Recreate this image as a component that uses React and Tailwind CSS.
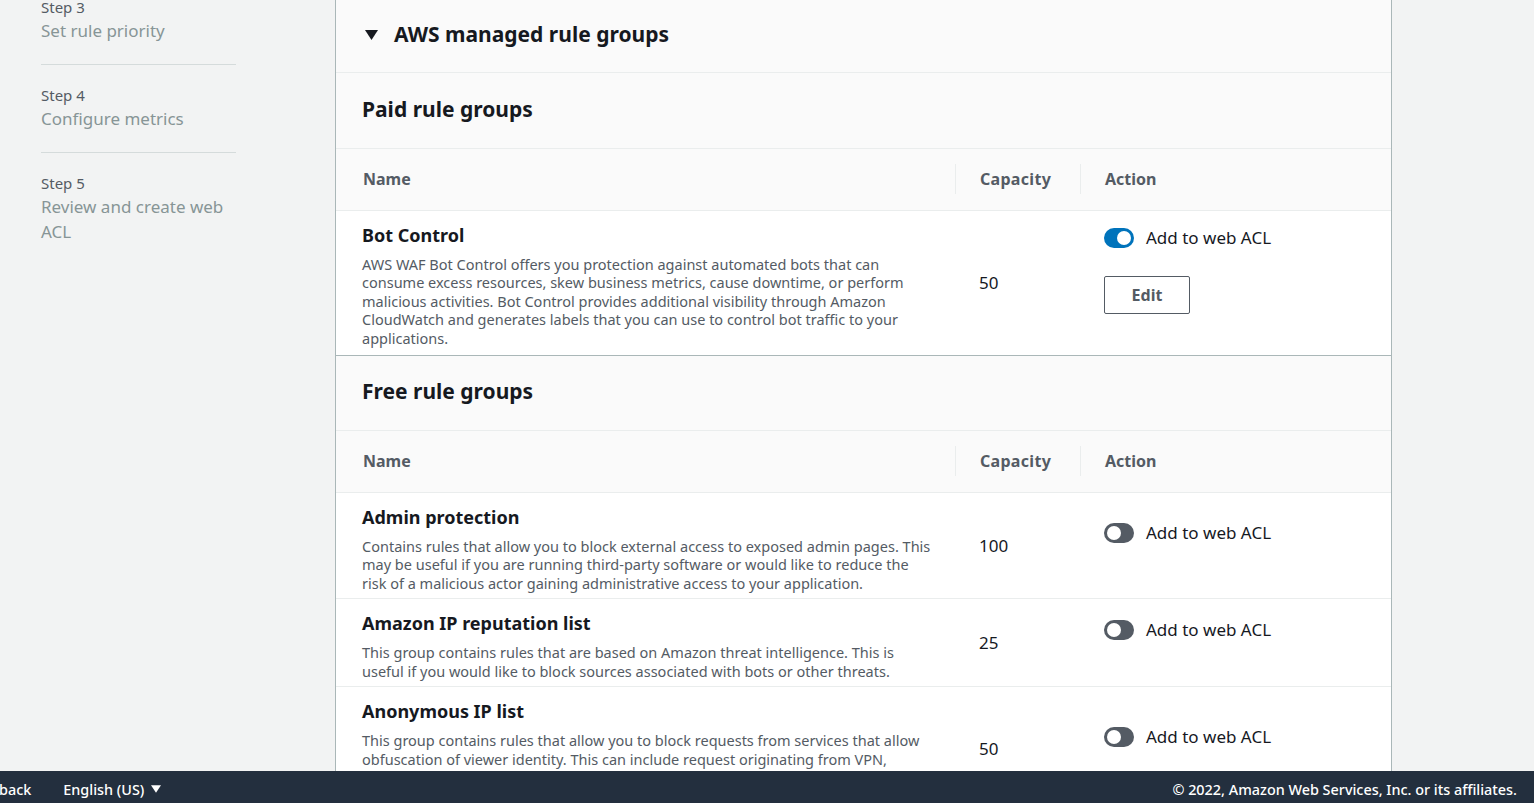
import { useState } from 'react';

const steps = [
  { label: 'Step 3', title: 'Set rule priority' },
  { label: 'Step 4', title: 'Configure metrics' },
  { label: 'Step 5', title: 'Review and create web ACL' },
];

const freeGroups = [
  {
    name: 'Admin protection',
    capacity: 100,
    description:
      'Contains rules that allow you to block external access to exposed admin pages. This may be useful if you are running third-party software or would like to reduce the risk of a malicious actor gaining administrative access to your application.',
  },
  {
    name: 'Amazon IP reputation list',
    capacity: 25,
    description:
      'This group contains rules that are based on Amazon threat intelligence. This is useful if you would like to block sources associated with bots or other threats.',
  },
  {
    name: 'Anonymous IP list',
    capacity: 50,
    description:
      'This group contains rules that allow you to block requests from services that allow obfuscation of viewer identity. This can include request originating from VPN, proxies, Tor nodes, and hosting providers. This is useful if you want to filter out viewers that may be trying to hide their identity from your application.',
  },
];

const Caret = ({ className }) => (
  <svg viewBox="0 0 13 10" className={className} fill="currentColor">
    <polygon points="0,0 13,0 6.5,10" />
  </svg>
);

const Toggle = ({ checked, onChange }) => (
  <button
    onClick={onChange}
    className={`w-[30px] h-[20px] rounded-full flex items-center px-[3px] ${checked ? 'bg-[#0073bb] justify-end' : 'bg-[#545b64] justify-start'}`}
    aria-pressed={checked}
  >
    <span className="block w-[14px] h-[14px] rounded-full bg-white"></span>
  </button>
);

const TableHead = () => (
  <thead>
    <tr className="bg-[#fafafa] border-b border-[#eaeded]">
      <th className="h-[61px] pl-[27px] text-left font-bold text-[16px] text-[#545b64]">Name</th>
      <th className="h-[61px] text-left font-bold text-[16px] text-[#545b64] tracking-[0.3px]">
        <div className="border-l border-[#eaeded] h-[30px] flex items-center pl-[24px]">Capacity</div>
      </th>
      <th className="h-[61px] text-left font-bold text-[16px] text-[#545b64]">
        <div className="border-l border-[#eaeded] h-[30px] flex items-center pl-[24px]">Action</div>
      </th>
    </tr>
  </thead>
);

const NameCell = ({ name, description, pb = 'pb-[6px]' }) => (
  <td className={`align-top pl-[26px] pr-[23px] pt-[12px] ${pb}`}>
    <div className="text-[18px] leading-[24px] font-bold text-[#16191f]">{name}</div>
    <p className="mt-[8px] text-[14.5px] leading-[18.5px] text-[#545b64]">{description}</p>
  </td>
);

const Cols = () => (
  <colgroup>
    <col className="w-[619px]" />
    <col className="w-[125px]" />
    <col />
  </colgroup>
);

const AddLabel = ({ checked, onChange }) => (
  <label className="flex items-center gap-[12px] h-[24px] text-[17px] text-[#16191f]">
    <Toggle checked={checked} onChange={onChange} />
    Add to web ACL
  </label>
);

export default function App() {
  const [bot, setBot] = useState(true);
  const [free, setFree] = useState([false, false, false]);

  return (
    <div
      className="h-[803px] overflow-hidden flex flex-col bg-[#f2f3f3] text-[#16191f]"
      style={{ fontFamily: '"Noto Sans", "Open Sans", sans-serif' }}
    >
      <div className="flex flex-1 min-h-0">
        {/* Wizard steps */}
        <aside className="w-[335px] shrink-0 pl-[41px]">
          <ol className="w-[195px] -mt-[23px]">
            {steps.map((s, i) => (
              <li
                key={s.label}
                className={`pt-[19px] pb-[21px] ${i < steps.length - 1 ? 'border-b border-[#d5dbdb]' : ''}`}
              >
                <div className="text-[15px] leading-[22px] text-[#545b64]">{s.label}</div>
                <div className="text-[17px] leading-[25px] text-[#879596]">{s.title}</div>
              </li>
            ))}
          </ol>
        </aside>

        {/* Main panel */}
        <main className="flex-1 min-w-0">
          <div className="w-[1057px] border-x border-[#aab7b8] bg-white">
            <div className="h-[73px] pb-[2px] bg-[#fafafa] border-b border-[#eaeded] flex items-center pl-[29px] gap-[16px]">
              <Caret className="w-[13px] h-[10px] text-[#16191f]" />
              <h2 className="text-[21px] font-bold">AWS managed rule groups</h2>
            </div>

            {/* Paid */}
            <div className="h-[76px] pb-[1px] bg-[#fafafa] border-b border-[#eaeded] flex items-center pl-[26px]">
              <h3 className="text-[21px] font-bold">Paid rule groups</h3>
            </div>
            <table className="w-full table-fixed border-collapse border-b border-[#aab7b8]">
              <Cols />
              <TableHead />
              <tbody>
                <tr>
                  <NameCell
                    pb="pb-[8px]"
                    name="Bot Control"
                    description="AWS WAF Bot Control offers you protection against automated bots that can consume excess resources, skew business metrics, cause downtime, or perform malicious activities. Bot Control provides additional visibility through Amazon CloudWatch and generates labels that you can use to control bot traffic to your applications."
                  />
                  <td className="align-middle pl-[24px] text-[17px]">50</td>
                  <td className="align-middle pl-[24px]">
                    <div className="pb-[26px]">
                      <AddLabel checked={bot} onChange={() => setBot(!bot)} />
                      <button className="mt-[26px] w-[86px] h-[38px] border border-[#545b64] rounded-[2px] bg-white text-[16px] font-bold text-[#545b64]">
                        Edit
                      </button>
                    </div>
                  </td>
                </tr>
              </tbody>
            </table>

            {/* Free */}
            <div className="h-[75px] pb-[2px] bg-[#fafafa] border-b border-[#eaeded] flex items-center pl-[26px]">
              <h3 className="text-[21px] font-bold">Free rule groups</h3>
            </div>
            <table className="w-full table-fixed border-collapse">
              <Cols />
              <TableHead />
              <tbody>
                {freeGroups.map((g, i) => (
                  <tr key={g.name} className="border-b border-[#eaeded]">
                    <NameCell name={g.name} description={g.description} />
                    <td className="align-middle pl-[24px] text-[17px]">{g.capacity}</td>
                    <td className="align-middle pl-[24px]">
                      <div className="pb-[25px]">
                        <AddLabel
                          checked={free[i]}
                          onChange={() => setFree(free.map((v, j) => (j === i ? !v : v)))}
                        />
                      </div>
                    </td>
                  </tr>
                ))}
              </tbody>
            </table>
          </div>
        </main>
      </div>

      {/* Footer */}
      <footer className="h-[32px] shrink-0 bg-[#232f3e] text-white text-[14.4px] font-medium flex items-center pt-[5px] pr-[17px]">
        <span className="-ml-[34px]">Feedback</span>
        <span className="ml-[32px] flex items-center gap-[7px]">
          English (US) <Caret className="w-[10px] h-[8px]" />
        </span>
        <span className="ml-auto">© 2022, Amazon Web Services, Inc. or its affiliates.</span>
      </footer>
    </div>
  );
}
